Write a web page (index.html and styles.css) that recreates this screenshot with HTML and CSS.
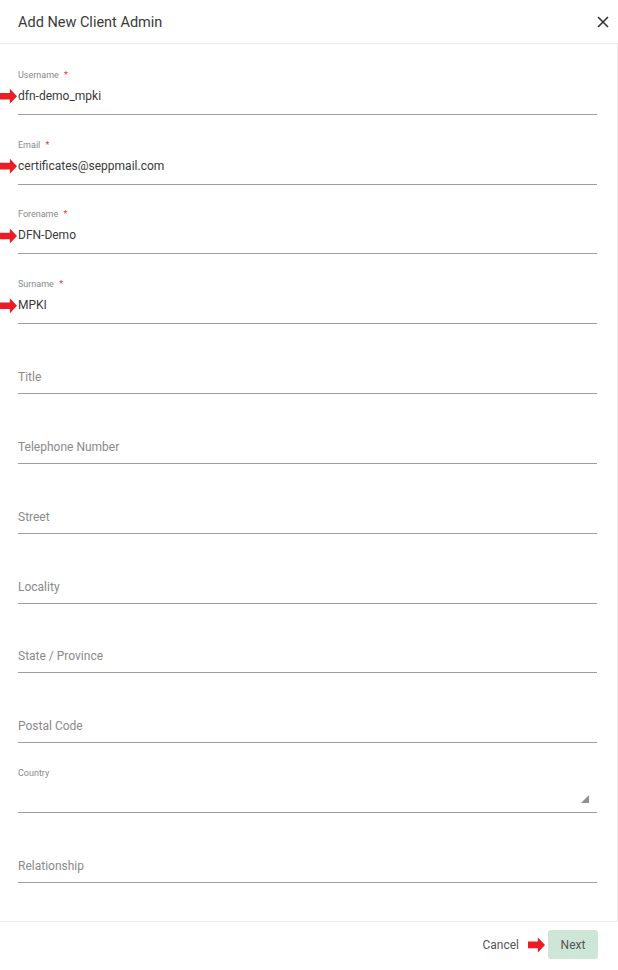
FILE: index.html
```
<!DOCTYPE html>
<html lang="en">
<head>
    <meta charset="UTF-8">
    <title>Add New Client Admin</title>
    <link rel="stylesheet" href="styles.css">
</head>
<body>
    <div class="dialog">
        <div class="dialog-header">
            <div class="dialog-title">Add New Client Admin</div>
            <svg class="close-icon" viewBox="0 0 12 12" width="12" height="12">
                <path d="M1 1 L11 11 M11 1 L1 11" stroke="#333" stroke-width="1.6" fill="none"/>
            </svg>
        </div>
        <div class="dialog-body">
            <div class="field">
                <div class="field-label">Username <span class="req">*</span></div>
                <div class="field-value"><span class="mark"></span>dfn-demo_mpki</div>
            </div>
            <div class="field">
                <div class="field-label">Email <span class="req">*</span></div>
                <div class="field-value"><span class="mark"></span>certificates@seppmail.com</div>
            </div>
            <div class="field">
                <div class="field-label">Forename <span class="req">*</span></div>
                <div class="field-value"><span class="mark"></span>DFN-Demo</div>
            </div>
            <div class="field">
                <div class="field-label">Surname <span class="req">*</span></div>
                <div class="field-value"><span class="mark"></span>MPKI</div>
            </div>
            <div class="field">
                <div class="field-value placeholder">Title</div>
            </div>
            <div class="field">
                <div class="field-value placeholder">Telephone Number</div>
            </div>
            <div class="field">
                <div class="field-value placeholder">Street</div>
            </div>
            <div class="field">
                <div class="field-value placeholder">Locality</div>
            </div>
            <div class="field">
                <div class="field-value placeholder">State / Province</div>
            </div>
            <div class="field">
                <div class="field-value placeholder">Postal Code</div>
            </div>
            <div class="field field-select">
                <div class="field-label">Country</div>
                <div class="field-value"><span class="select-arrow"></span></div>
            </div>
            <div class="field">
                <div class="field-value placeholder">Relationship</div>
            </div>
        </div>
        <div class="dialog-footer">
            <button class="btn-cancel">Cancel</button>
            <span class="mark mark-inline"></span>
            <button class="btn-next">Next</button>
        </div>
    </div>
</body>
</html>
```

FILE: styles.css
```
body {
    margin: 0;
    padding: 0;
    background: #fff;
    font-family: Roboto, "Liberation Sans", Arial, sans-serif;
}
.dialog {
    width: 618px;
    height: 970px;
    background: #fff;
    display: flex;
    flex-direction: column;
}
.dialog-header {
    height: 44px;
    border-bottom: 1px solid #ececec;
    display: flex;
    align-items: center;
    justify-content: space-between;
    padding: 0 9px 0 18px;
    box-sizing: border-box;
    flex-shrink: 0;
}
.dialog-title {
    font-size: 14.5px;
    color: #3a3a3a;
    padding-top: 2px;
}
.close-icon {
    display: block;
    margin-top: 1px;
}
.dialog-body {
    border-right: 1px solid #ececec;
    padding: 1px 20px 38px 18px;
}
/* form fields */
.field {
    position: relative;
    height: 69.82px;
    box-sizing: border-box;
    border-bottom: 1px solid #9e9e9e;
    display: flex;
    flex-direction: column;
    justify-content: flex-end;
    padding-bottom: 8px;
}
.field-label {
    font-size: 9px;
    line-height: 12px;
    color: #888;
    margin-bottom: 5px;
}
.req {
    color: #e53935;
    margin-left: 3px;
}
.field-value {
    position: relative;
    font-size: 12px;
    line-height: 20px;
    height: 20px;
    color: #3a3a3a;
}
.placeholder {
    color: #8a8a8a;
    margin-bottom: -2px;
}
.mark {
    position: absolute;
    left: -18px;
    top: 3px;
    width: 17px;
    height: 15px;
    background: #ec1c24;
    clip-path: polygon(0 28%, 58% 28%, 58% 0, 100% 50%, 58% 100%, 58% 72%, 0 72%);
}
.select-arrow {
    position: absolute;
    right: 8px;
    bottom: 1px;
    width: 0;
    height: 0;
    border-left: 8px solid transparent;
    border-bottom: 8px solid #909090;
}
.dialog-footer {
    flex: 1;
    border-top: 1px solid #ececec;
    display: flex;
    align-items: center;
    justify-content: flex-end;
    padding: 0 20px 2px 0;
}
.btn-cancel {
    background: none;
    border: none;
    font-family: inherit;
    font-size: 12px;
    color: #555;
    padding: 0;
    margin-right: 9px;
}
.mark-inline {
    position: static;
    display: inline-block;
    margin-right: 3px;
}
.btn-next {
    width: 50px;
    height: 29px;
    background: #cde6d7;
    border: none;
    border-radius: 3px;
    font-family: inherit;
    font-size: 12px;
    color: #555;
}
```
